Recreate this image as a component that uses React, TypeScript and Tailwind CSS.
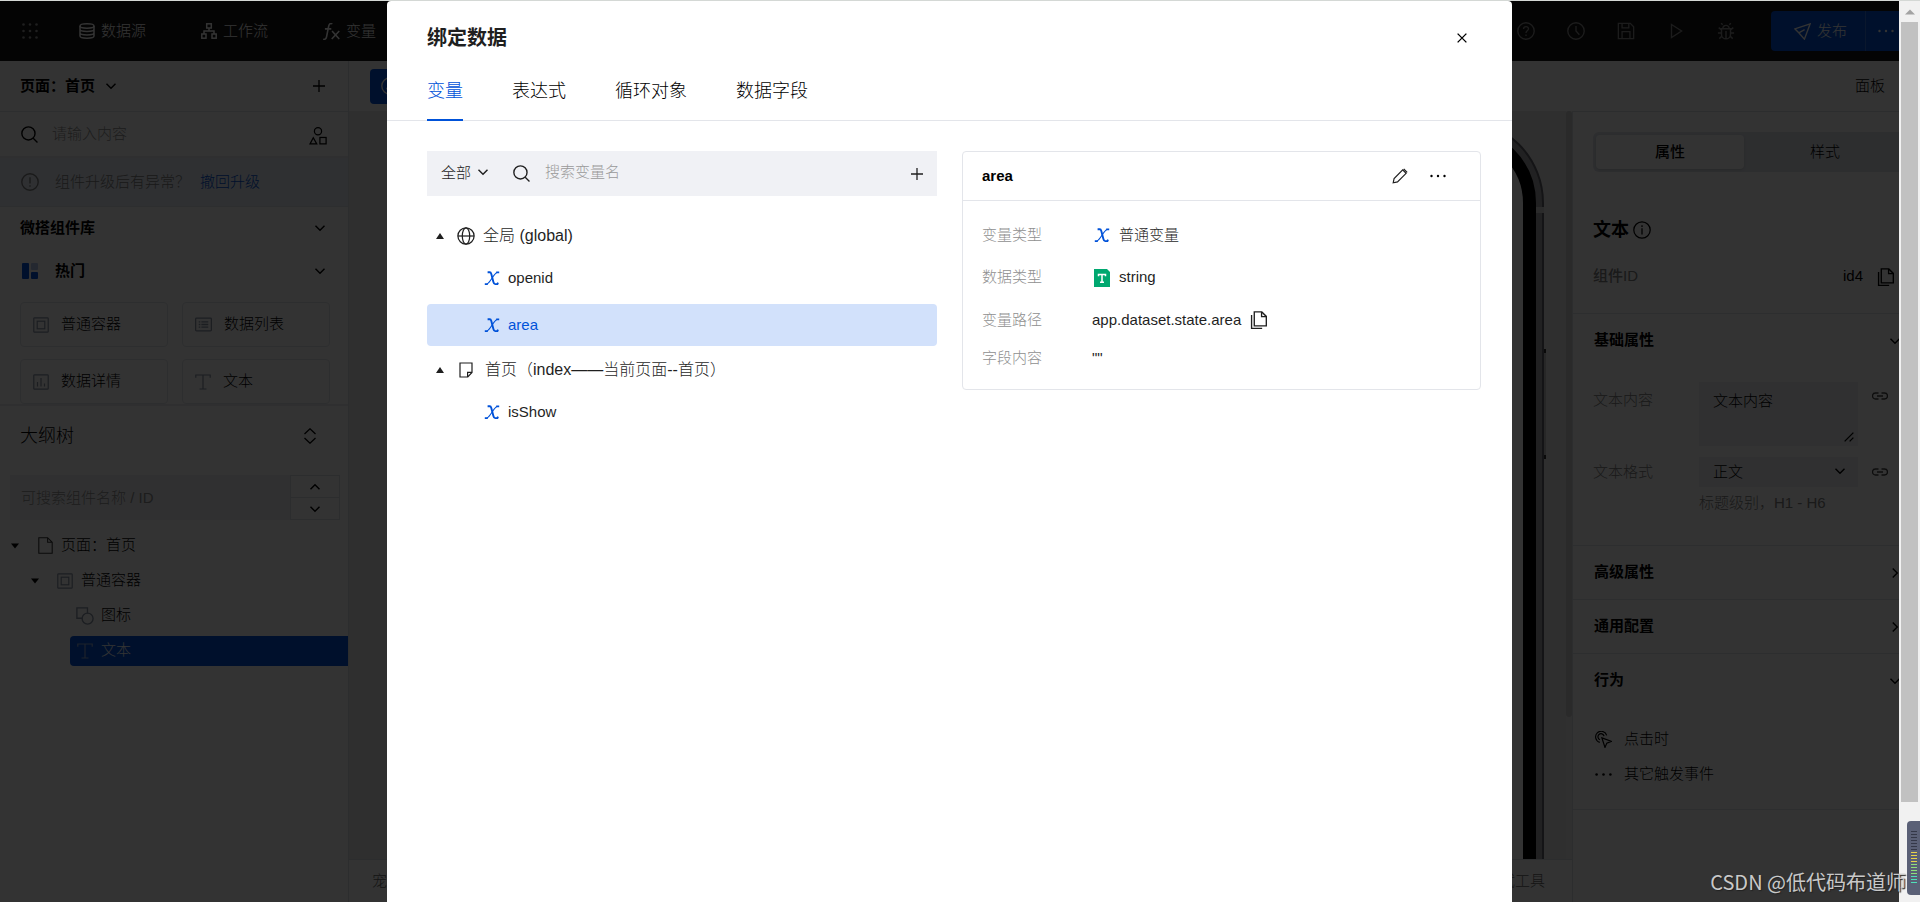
import React from "react";

type IconProps = { className?: string; children?: React.ReactNode; fill?: string; sw?: number };

function Icon({ className = "size-4", children, fill = "none", sw = 1.2 }: IconProps) {
  return (
    <svg
      viewBox="0 0 16 16"
      className={`shrink-0 ${className}`}
      fill={fill}
      stroke={fill === "none" ? "currentColor" : "none"}
      strokeWidth={sw}
      aria-hidden="true"
    >
      {children}
    </svg>
  );
}

const ChevronDown = ({ className = "size-3" }: { className?: string }) => (
  <Icon className={className} sw={1.9}>
    <path d="M2 5l6 6 6-6" />
  </Icon>
);
const ChevronUp = () => (
  <Icon className="size-3" sw={1.9}>
    <path d="M2 11l6-6 6 6" />
  </Icon>
);
const ChevronRight = () => (
  <Icon className="size-3" sw={1.9}>
    <path d="M5 2l6 6-6 6" />
  </Icon>
);
const Plus = ({ className = "size-3" }: { className?: string }) => (
  <Icon className={className} sw={1.7}>
    <path d="M8 0v16M0 8h16" />
  </Icon>
);
const Search = ({ className = "size-[17px]" }: { className?: string }) => (
  <Icon className={className} sw={1.3}>
    <circle cx="7" cy="7" r="6.2" />
    <path d="M11.5 11.5l4 4" />
  </Icon>
);
const Dots = ({ className = "size-4" }: { className?: string }) => (
  <Icon className={className} fill="currentColor">
    <circle cx="1.5" cy="8" r="1.2" />
    <circle cx="8" cy="8" r="1.2" />
    <circle cx="14.5" cy="8" r="1.2" />
  </Icon>
);
const Copy = ({ className = "size-[18px]" }: { className?: string }) => (
  <Icon className={className} sw={1.2}>
    <path d="M3.800 .8h6.700l4 4v8.400H3.800z" />
    <path d="M10.300 .8V5h4.200M1.400 3.500v11.900h9.400" />
  </Icon>
);
const BoxIcon = ({ className = "size-4" }: { className?: string }) => (
  <Icon className={className}>
    <rect x=".8" y=".8" width="14.4" height="14.4" rx=".8" />
    <rect x="4.2" y="4.2" width="7.6" height="7.6" />
  </Icon>
);
const TextIcon = ({ className = "size-4" }: { className?: string }) => (
  <Icon className={className}>
    <path d="M.8 3.8V1h14.4v2.8M8 1v14M4.5 15h7" />
  </Icon>
);
const VarIcon = () => (
  <Icon className="size-4 text-[#0052d9]" sw={1}>
    <path d="M3.600 2.200h2.200c.9 0 1.200.7 1.500 1.700l2.100 8c.4 1.500.8 2.200 1.700 2.200h2.300l.6-1.500" strokeWidth="1.900" />
    <path d="M12.900 2.500C11.500 2.900 10.200 5 8.300 7.800 6.200 11 4.700 13.400 3 14" strokeWidth="1.100" />
    <path d="M12.200 2.300h3M.8 14.200h3" strokeWidth="1.800" />
  </Icon>
);
const LinkIcon = () => (
  <Icon className="size-4" sw={1.3}>
    <path d="M6.500 11H3.500a3 3 0 0 1 0-6h3M9.500 5h3a3 3 0 0 1 0 6h-3M5 8h6" />
  </Icon>
);
const TriDown = () => (
  <Icon className="size-2" fill="currentColor">
    <path d="M0 3h16L8 13z" />
  </Icon>
);
const TriUp = () => (
  <Icon className="size-2" fill="currentColor">
    <path d="M8 2l8 12H0z" />
  </Icon>
);

function TopBar() {
  return (
    <header className="flex h-[60px] shrink-0 items-center bg-[#141414] pl-[22px] text-[15px] text-white">
      <button aria-label="应用菜单" className="mr-[41px] text-[#999]">
        <Icon fill="currentColor">
          {[1.5, 8, 14.5].map((y) => [1.5, 8, 14.5].map((x) => <circle key={`${x}-${y}`} cx={x} cy={y} r="1.3" />))}
        </Icon>
      </button>
      <nav className="flex items-center gap-[55px]">
        <a href="#data" className="flex items-center gap-1.5">
          <Icon sw={1.5}>
            <ellipse cx="8" cy="3" rx="7" ry="2.200" />
            <path d="M1 3v10c0 1.200 3.100 2.200 7 2.200s7-1 7-2.200V3M1 6.300c0 1.200 3.100 2.200 7 2.200s7-1 7-2.200M1 9.700c0 1.200 3.100 2.200 7 2.200s7-1 7-2.200" />
          </Icon>
          数据源
        </a>
        <a href="#flow" className="flex items-center gap-1.5">
          <Icon sw={1.5}>
            <rect x="5.700" y=".8" width="4.600" height="4.200" />
            <rect x=".8" y="11" width="4.200" height="4.200" />
            <rect x="11" y="11" width="4.200" height="4.200" />
            <path d="M8 5v3M3 11V8h10v3" />
          </Icon>
          工作流
        </a>
        <a href="#vars" className="flex items-center gap-1.5">
          <Icon className="size-[17px]" sw={1.5}>
            <path d="M8.800.8C6.700-.1 5.700 1.200 5.300 3.200L3.400 12.700C3 14.800 2 15.700.2 15.200M1.800 5.500h6M8.500 7.500l6.800 7.500M15.300 7.500L8.200 15" />
          </Icon>
          变量
        </a>
      </nav>
      <div className="mr-9 ml-auto flex items-center gap-8 text-[#8c8c8c]">
        <button aria-label="帮助">
          <Icon className="size-[18px]">
            <circle cx="8" cy="8" r="7.300" />
            <path d="M5.800 6.300C5.900 3.300 10.400 3.500 10.200 6.200 10 7.800 8 7.800 8 9.700M8 11v1.400" />
          </Icon>
        </button>
        <button aria-label="历史">
          <Icon className="size-[18px]">
            <circle cx="8" cy="8" r="7.300" />
            <path d="M8 3.500V8l3 3.300" />
          </Icon>
        </button>
        <button aria-label="保存">
          <Icon className="size-[18px]">
            <path d="M1.200 1.200h10.600l3 3v10.600H1.200zM4.500 1.200v4h6v-4M4.500 14.800V8.500h7v6.300" />
          </Icon>
        </button>
        <button aria-label="预览">
          <Icon className="size-[18px]">
            <path d="M4 2.200L13 8 4 13.800z" />
          </Icon>
        </button>
        <button aria-label="调试">
          <Icon className="size-[18px]" sw={1.300}>
            <path d="M4 6h8v5a4 4 0 0 1-8 0zM5.200 6c0-4 5.600-4 5.600 0M8 8v7M5 2.500L3.700 1M11 2.500L12.300 1M4 7L1.500 5M12 7l2.500-2M4 9.800H.8M12 9.800h3.200M4.500 12.500L2 14.800M11.500 12.500l2.500 2.300" />
          </Icon>
        </button>
      </div>
      <div className="flex h-10 rounded bg-[#0052d9]">
        <button className="flex w-[94px] items-center gap-1.5 pl-[23px]">
          <Icon className="size-[17px]" sw={1.300}>
            <path d="M15.200.8L.8 5.500l3.700 3.700L9.800 15.200zM4.500 9.200L10 6.200" />
          </Icon>
          发布
        </button>
        <button aria-label="更多发布选项" className="flex w-11 items-center border-l border-[#3375e1] pl-3">
          <Dots />
        </button>
      </div>
    </header>
  );
}

const cards = [
  { name: "普通容器", icon: <BoxIcon /> },
  {
    name: "数据列表",
    icon: (
      <Icon className="size-[17px]">
        <rect x=".6" y="2" width="14.800" height="12" rx=".8" />
        <path d="M3.500 5.500H5M6 5.500h6.500M3.500 8H5M6 8h6.500M3.500 10.500H5M6 10.500h6.500" />
      </Icon>
    ),
  },
  {
    name: "数据详情",
    icon: (
      <Icon>
        <rect x=".8" y=".8" width="14.400" height="14.400" rx=".8" />
        <path d="M4.500 8v4.500M8 4v8.500M11.500 9.500v3" />
      </Icon>
    ),
  },
  { name: "文本", icon: <TextIcon /> },
];

function LeftPanel() {
  return (
    <aside className="w-[349px] shrink-0 border-r border-[#dcdfe6] bg-white text-[15px] text-black">
      <div className="flex h-[51px] items-center border-b border-[#e2e5eb] px-5 font-bold">
        页面：首页
        <ChevronDown className="ml-2.5 size-3" />
        <button aria-label="新建页面" className="ml-auto pr-[3px]">
          <Plus />
        </button>
      </div>
      <div className="flex h-[46px] items-center border-b-2 border-[#e9ebf0] px-[21px]">
        <Search />
        <input aria-label="搜索组件" placeholder="请输入内容" className="ml-3.5 w-0 flex-1 bg-transparent outline-none placeholder:text-[#8f8f8f]" />
        <button aria-label="组件分类" className="pt-1">
          <Icon className="size-[18px]" sw={1.100}>
            <circle cx="8" cy="3.800" r="3.200" />
            <path d="M3.800 9.500L.9 15h6z" />
            <rect x="9.700" y="9.300" width="5.500" height="5.700" />
          </Icon>
        </button>
      </div>
      <div className="flex h-[49px] items-center border-b border-[#e2e5eb] bg-[#e8eef8] px-[21px] text-[#808080]">
        <Icon className="size-[18px]">
          <circle cx="8" cy="8" r="7.300" />
          <path d="M8 3.700v5.600M8 10.800v1.500" />
        </Icon>
        <span className="ml-4 w-[145px] whitespace-nowrap">组件升级后有异常？</span>
        <a href="#rollback" className="text-[#0052d9]">
          撤回升级
        </a>
      </div>
      <button className="flex h-[42px] w-full items-center justify-between pr-[22px] pl-5 font-bold">
        微搭组件库
        <ChevronDown />
      </button>
      <button className="flex h-11 w-full items-center pr-[22px] pl-[22px] font-bold">
        <Icon fill="#0052d9">
          <rect width="7" height="16" rx="1" />
          <rect x="9" y="9" width="7" height="7" rx="1" />
          <rect x="9" width="7" height="7" rx="1" fill="#b5c7f0" />
        </Icon>
        <span className="mr-auto ml-[17px]">热门</span>
        <ChevronDown />
      </button>
      <div className="grid grid-cols-2 gap-x-3.5 gap-y-3 border-b-2 border-[#e9ebf0] pt-[9px] pr-[18px] pl-5">
        {cards.map((c) => (
          <button key={c.name} className="flex h-[45px] items-center gap-3 rounded border border-[#e2e5eb] pl-3">
            <span className="text-[#8a94a6]">{c.icon}</span>
            {c.name}
          </button>
        ))}
      </div>
      <div className="flex h-[60px] items-center justify-between pr-[30px] pl-5 text-lg">
        大纲树
        <button aria-label="展开折叠">
          <Icon className="size-4" sw={1.300}>
            <path d="M2.500 6L8 .8 13.500 6M2.500 10L8 15.200 13.500 10" />
          </Icon>
        </button>
      </div>
      <div className="mt-[9px] mr-2 ml-2.5 flex h-[45px]">
        <input aria-label="搜索大纲" placeholder="可搜索组件名称 / ID" className="w-0 flex-1 bg-[#f0f1f5] pt-0.5 pl-[11px] outline-none placeholder:text-[#8f8f8f]" />
        <div className="flex w-[50px] flex-col border border-[#dcdfe6]">
          <button aria-label="上一个" className="flex flex-1 items-center justify-center border-b border-[#dcdfe6]">
            <ChevronUp />
          </button>
          <button aria-label="下一个" className="flex flex-1 items-center justify-center">
            <ChevronDown />
          </button>
        </div>
      </div>
      <ul className="pt-2">
        <li className="flex h-[35px] items-center pl-[11px]">
          <TriDown />
          <Icon className="ml-[18px] size-[17px] text-[#333]" sw={1}>
            <path d="M1.700.7h8.300l4.300 4.300v10.300H1.700zM10 .7V5h4.300" />
          </Icon>
          <span className="ml-[7px]">页面：首页</span>
        </li>
        <li className="flex h-[35px] items-center pl-[31px]">
          <TriDown />
          <BoxIcon className="ml-[18px] size-4 text-[#8a94a6]" />
          <span className="ml-2">普通容器</span>
        </li>
        <li className="flex h-[35px] items-center pl-[76px]">
          <Icon className="size-[18px] text-[#8a94a6]">
            <path d="M6 10H.8V.8h9.400v5" />
            <circle cx="10.300" cy="10.300" r="4.900" />
          </Icon>
          <span className="ml-[7px]">图标</span>
        </li>
        <li className="flex h-[35px] items-center pl-[70px]">
          <div className="flex h-[30px] flex-1 items-center rounded-l-sm bg-[#0052d9] pl-[7px] text-white">
            <TextIcon className="size-4 text-[#8fa6d8]" />
            <span className="ml-2">文本</span>
          </div>
        </li>
      </ul>
    </aside>
  );
}

function Canvas() {
  return (
    <section className="flex w-0 flex-1 flex-col border-r border-[#dcdfe6]">
      <div className="relative flex-1 overflow-hidden bg-[#ebebeb]">
        {/* phone preview */}
        <div className="absolute top-2 right-[28px] h-[900px] w-[500px] rounded-[84px] border-2 border-[#66666e] bg-[#a6a6aa] p-1.5">
          <div className="h-full w-full rounded-[76px] border-[13px] border-black bg-white" />
          <div className="absolute top-[86px] -right-0.5 h-1.5 w-2 bg-[#d4d4d8]" />
          <div className="absolute top-[228px] -right-1 h-[110px] w-0.5 border-y-4 border-[#333] bg-[#c0c0c0]" />
        </div>
        <div className="absolute top-0 right-0 h-full w-1.5 bg-[#f1f1f1]">
          <div className="h-[606px] rounded-full bg-[#cfcfd2]" />
        </div>
      </div>
      <footer className="flex h-[43px] items-center justify-between border-t border-[#dcdfe6] bg-white pr-[27px] pl-[23px] text-[15px] text-[#666]">
        <span>宠物</span>
        <span>开发调试工具</span>
      </footer>
    </section>
  );
}

function Section({ title, open, children }: { title: string; open?: boolean; children?: React.ReactNode }) {
  return (
    <div className="border-t border-[#e2e5eb]">
      <button className="flex h-[53px] w-full items-center justify-between pr-2 pl-[21px] font-bold">
        {title}
        {open ? <ChevronDown /> : <ChevronRight />}
      </button>
      {children}
    </div>
  );
}

function RightPanel() {
  return (
    <aside className="w-[336px] shrink-0 border-t border-[#dcdfe6] bg-white text-[15px] text-black">
      <div className="mt-5 ml-5 flex h-10 rounded-md bg-[#dfe3ea] p-[3px]">
        <button className="w-[148px] rounded bg-white font-medium shadow-sm">属性</button>
        <button className="flex-1">样式</button>
      </div>
      <div className="mt-10 flex h-9 items-center gap-1 pl-5 text-lg font-bold">
        文本
        <Icon className="size-[18px]" sw={1.100}>
          <circle cx="8" cy="8" r="7.300" />
          <path d="M8 6.500V12M8 3.800v1.500" />
        </Icon>
      </div>
      <div className="flex h-[65px] items-center pr-[14px] pb-2 pl-5">
        <span className="font-medium text-[#808080]">组件ID</span>
        <span className="ml-auto">id4</span>
        <button aria-label="复制组件ID" className="ml-3.5">
          <Copy />
        </button>
      </div>
      <Section title="基础属性" open>
        <div className="pt-[15px] pb-[30px] pl-5">
          <div className="flex">
            <label htmlFor="content" className="w-[106px] pt-[7px] text-[#808080]">
              文本内容
            </label>
            <div className="relative h-16 w-[159px]">
              <textarea id="content" defaultValue="文本内容" className="h-full w-full resize-none bg-[#f0f1f5] px-3.5 py-2 outline-none" />
              <Icon className="absolute right-1 bottom-1 size-2.5" sw={2.200}>
                <path d="M1 15L15 1M9 15l6-6" />
              </Icon>
            </div>
            <button aria-label="绑定文本内容" className="ml-3.5 h-7 text-[#444]">
              <LinkIcon />
            </button>
          </div>
          <div className="mt-[11px] flex items-center">
            <label htmlFor="format" className="w-[106px] text-[#808080]">
              文本格式
            </label>
            <div className="relative h-[30px] w-[159px]">
              <select id="format" className="h-full w-full appearance-none bg-[#f0f1f5] px-3.5 outline-none">
                <option>正文</option>
              </select>
              <ChevronDown className="pointer-events-none absolute top-2 right-3 size-3" />
            </div>
            <button aria-label="绑定文本格式" className="ml-3.5 text-[#444]">
              <LinkIcon />
            </button>
          </div>
          <p className="mt-1 pl-[106px] leading-6 text-[#808080]">标题级别，H1 - H6</p>
        </div>
      </Section>
      <Section title="高级属性" />
      <Section title="通用配置" />
      <Section title="行为" open>
        <div className="border-b border-[#e2e5eb] pt-[15px] pb-[17px] pl-[22px]">
          <button className="flex h-[35px] items-center gap-3">
            <Icon className="size-[17px]" sw={1.100}>
              <path d="M4.500 10.700A5.300 5.300 0 1 1 11 4.200M4.700 8.200A2.900 2.900 0 1 1 8.500 4.800M6.500 6.500l8.800 3.200-4.200 1.700-1.700 4.100z" />
            </Icon>
            点击时
          </button>
          <button className="flex h-[35px] items-center gap-3">
            <Dots className="size-[17px]" />
            其它触发事件
          </button>
        </div>
      </Section>
    </aside>
  );
}

const tabs = ["变量", "表达式", "循环对象", "数据字段"];

function VarRow({ name, active }: { name: string; active?: boolean }) {
  return (
    <li>
      <button
        aria-pressed={!!active}
        className={
          active
            ? "flex h-[42px] w-full items-center gap-2 rounded bg-[#d2e1fb] pl-[57px] text-[#0052d9]"
            : "flex h-[42px] w-full items-center gap-2 rounded pl-[57px]"
        }
      >
        <VarIcon />
        {name}
      </button>
    </li>
  );
}

function BindDialog() {
  return (
    <div
      role="dialog"
      aria-label="绑定数据"
      className="flex w-[1125px] max-w-full flex-col rounded-t bg-white text-[15px] text-[#1f1f1f]"
    >
      <div className="flex h-[74px] shrink-0 items-center justify-between pr-[45px] pl-10">
        <h1 className="text-xl font-bold">绑定数据</h1>
        <button aria-label="关闭">
          <Icon className="size-2.5 text-black" sw={2.200}>
            <path d="M1 1l14 14M15 1L1 15" />
          </Icon>
        </button>
      </div>
      <div role="tablist" className="flex h-[46px] shrink-0 gap-[49px] border-b border-[#e3e5ea] pl-10 text-lg text-black">
        {tabs.map((t, i) => (
          <button
            key={t}
            role="tab"
            aria-selected={i === 0}
            className={
              i === 0
                ? "-mb-px flex flex-col items-stretch justify-between pt-0.5 text-[#0052d9] after:h-0.5 after:bg-[#0052d9]"
                : "flex flex-col justify-start pt-0.5"
            }
          >
            {t}
          </button>
        ))}
      </div>
      <div className="flex items-start gap-[25px] pt-[30px] pr-[31px] pl-10">
        <section className="w-[510px] shrink-0">
          <div className="flex h-[45px] items-center bg-[#f0f1f5] pr-3.5 pl-3.5">
            <div className="relative w-12">
              <select aria-label="变量范围" className="w-full appearance-none bg-transparent outline-none">
                <option>全部</option>
              </select>
              <ChevronDown className="pointer-events-none absolute top-1 right-0 size-3" />
            </div>
            <Search className="ml-6 size-[17px]" />
            <input aria-label="搜索变量名" placeholder="搜索变量名" className="ml-[15px] w-0 flex-1 bg-transparent pb-0.5 outline-none placeholder:text-[#999]" />
            <button aria-label="新建变量">
              <Plus className="size-3" />
            </button>
          </div>
          <ul className="pt-4">
            <li className="flex h-[45px] items-center pt-0.5 pl-[9px] text-base">
              <TriUp />
              <Icon className="ml-[13px] size-[18px]" sw={1.100}>
                <circle cx="8" cy="8" r="7.200" />
                <ellipse cx="8" cy="8" rx="3.300" ry="7.200" />
                <path d="M.8 8h14.400" />
              </Icon>
              <span className="ml-2">全局 (global)</span>
            </li>
            <VarRow name="openid" />
            <li className="h-[5px]" aria-hidden="true" />
            <VarRow name="area" active />
            <li className="flex h-[45px] items-center pt-0.5 pl-[9px] text-base">
              <TriUp />
              <Icon className="ml-3.5 size-4" sw={1.200}>
                <path d="M2 1h12v9.500L9.800 15H2zM14 10.300H9.600V15" />
              </Icon>
              <span className="ml-[11px]">首页（index——当前页面--首页）</span>
            </li>
            <VarRow name="isShow" />
          </ul>
        </section>
        <section className="w-0 flex-1 rounded border border-[#e3e5ea]">
          <div className="flex h-[49px] items-center border-b border-[#e3e5ea] pr-[34px] pl-[19px]">
            <h2 className="font-bold text-black">area</h2>
            <button aria-label="编辑变量" className="ml-auto">
              <Icon className="size-4" sw={1.200}>
                <path d="M1.200 14.800l.9-4.300L10.700 1.900l3.400 3.400-8.600 8.600zM11.700.8l3.500 3.500" />
              </Icon>
            </button>
            <button aria-label="更多" className="ml-[22px] text-black">
              <Dots />
            </button>
          </div>
          <dl className="grid grid-cols-[110px_1fr] pt-[13px] pb-3.5 pl-[19px]">
            <dt className="flex h-[42px] items-center text-[#8f8f8f]">变量类型</dt>
            <dd className="flex h-[42px] items-center gap-[9px] pl-0.5">
              <VarIcon />
              普通变量
            </dd>
            <dt className="flex h-[43px] items-center text-[#8f8f8f]">数据类型</dt>
            <dd className="flex h-[43px] items-center gap-[9px] pl-0.5">
              <svg viewBox="0 0 16 18" className="h-[18px] w-4 shrink-0" aria-hidden="true">
                <path d="M0 0h13l3 3v15H0z" fill="#00a870" />
                <path d="M4.500 7.200V5.500h7v1.700M8 5.500V13M6 13.200h4" fill="none" stroke="#fff" strokeWidth="1.500" />
              </svg>
              string
            </dd>
            <dt className="flex h-[42px] items-center text-[#8f8f8f]">变量路径</dt>
            <dd className="flex h-[42px] items-center gap-[9px]">
              app.dataset.state.area
              <button aria-label="复制变量路径">
                <Copy />
              </button>
            </dd>
            <dt className="flex h-[34px] items-center text-[#8f8f8f]">字段内容</dt>
            <dd className="flex h-[34px] items-center">""</dd>
          </dl>
        </section>
      </div>
    </div>
  );
}

const meter = Array.from({ length: 18 }, (_, i) => i);

export default function App() {
  return (
    <div className="relative flex h-screen overflow-hidden border-t border-[#d4d8d5] bg-white font-['Liberation_Sans','Noto_Sans_CJK_SC',sans-serif] font-light">
      <div className="relative w-0 flex-1 overflow-hidden">
        <div className="flex h-full w-[calc(100%+10px)] flex-col">
          <TopBar />
          <div className="flex min-h-0 flex-1 bg-white">
            <LeftPanel />
            <div className="flex w-0 flex-1 flex-col">
              <div className="flex h-[50px] shrink-0 items-center justify-between bg-white pr-6 pl-[21px] text-[15px]">
                <button className="flex h-[35px] items-center gap-2 rounded bg-[#0052d9] px-[11px] text-white" aria-label="组件模式">
                  <Icon className="size-[18px]">
                    <circle cx="8" cy="8" r="7.300" />
                    <path d="M5 11l3-6 3 6" />
                  </Icon>
                </button>
                <span>面板</span>
              </div>
              <div className="flex min-h-0 flex-1">
                <Canvas />
                <RightPanel />
              </div>
            </div>
          </div>
        </div>
        <div className="absolute inset-0 flex justify-center bg-black/80">
          <BindDialog />
        </div>
      </div>
      <div className="flex w-[21px] shrink-0 flex-col bg-[#f1f1f1] px-0.5 pb-[100px]" aria-hidden="true">
        <div className="flex h-[21px] items-center justify-center text-[#a3a3a3]">
          <Icon className="size-2.5" fill="currentColor">
            <path d="M8 4l8 8H0z" />
          </Icon>
        </div>
        <div className="flex-1 bg-[#c1c1c1]" />
      </div>
      <div
        aria-hidden="true"
        className="absolute right-0 bottom-[7px] flex h-[74px] w-[13px] flex-col items-center gap-0.5 rounded-l bg-[#5a6076] pt-2.5"
      >
        {meter.map((i) => (
          <span key={i} className={i < 7 ? "h-px w-1.5 bg-[#343848]" : i < 11 ? "h-px w-1.5 bg-[#e6d24a]" : i < 15 ? "h-px w-1.5 bg-[#8fe07a]" : "h-px w-1.5 bg-[#4fe0b8]"} />
        ))}
      </div>
      <p className="absolute right-3.5 bottom-1.5 font-['Noto_Sans_CJK_SC',sans-serif] text-xl font-normal whitespace-nowrap text-[#c9c9c9] [text-shadow:1px_1px_1px_#222]">
        CSDN @低代码布道师
      </p>
    </div>
  );
}
